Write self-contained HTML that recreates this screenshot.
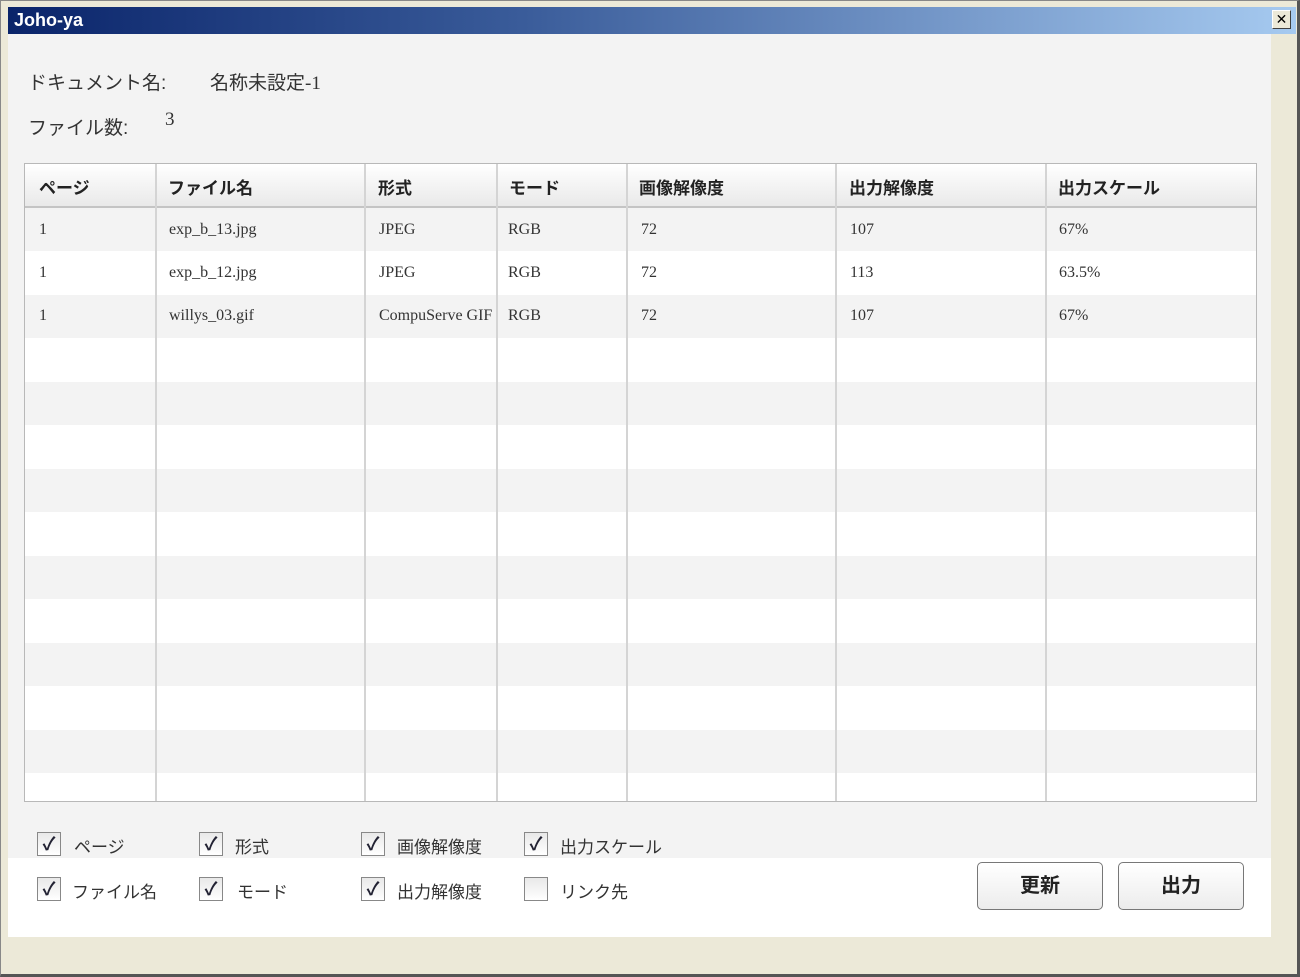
<!DOCTYPE html>
<html><head><meta charset="utf-8"><style>
*{margin:0;padding:0;box-sizing:border-box}
body{width:1300px;height:977px;background:#ece9d8;position:relative;overflow:hidden;font-family:"Liberation Sans","Noto Sans CJK JP",sans-serif}
.a{position:absolute}
.frame{left:0;top:0;width:1300px;height:977px;border:1px solid #888;border-right:3px solid #555;border-bottom:3px solid #555}
.title{left:8px;top:7px;width:1288px;height:27px;background:linear-gradient(90deg,#0a246a 0%,#3a5c9a 40%,#a6caf0 100%);color:#fff;font-weight:bold;font-size:18px;line-height:27px;padding-left:6px}
.close{left:1272px;top:10px;width:19px;height:19px;background:#ece9d8;border:1px solid;border-color:#fff #404040 #404040 #fff;font-size:14px;line-height:16px;text-align:center;color:#000}
.panel{left:8px;top:34px;width:1263px;height:903px;background:#f3f3f3}
.lbl{font-size:19px;color:#333}
.tbl{left:24px;top:163px;width:1233px;height:639px;border:1px solid #b8b8b8;background:#fff;overflow:hidden}
.hd{left:0;top:0;width:1231px;height:44px;background:linear-gradient(#fff,#e9e9e9);border-bottom:2px solid #c4c4c4}
.h{position:absolute;top:10px;font-size:17px;font-weight:bold;color:#222}
.row{position:absolute;left:0;width:1231px;height:43px}
.g{background:#f3f3f3}
.c{position:absolute;font-family:"Liberation Serif",serif;font-size:16px;color:#333;top:13px;white-space:nowrap;overflow:hidden}
.vl{position:absolute;top:0;width:2px;height:639px;background:#d4d4d4}
.cb{width:24px;height:24px;border:1px solid #888;background:linear-gradient(#e8e8e8,#fff);font-size:18px;line-height:22px;text-align:center;color:#223;font-weight:bold}
.cl{font-size:17px;color:#333}
.btn{width:126px;height:48px;border:1px solid #777;border-radius:5px;background:linear-gradient(#fff,#ececec);font-size:20px;font-weight:bold;text-align:center;line-height:46px;color:#222}
</style></head><body>
<div class="a frame"></div>
<div class="a title">Joho-ya</div>
<div class="a close">✕</div>
<div class="a panel"></div>
<div class="a" style="left:8px;top:858px;width:1263px;height:79px;background:#fff"></div>
<div class="a lbl" style="left:28px;top:68px">ドキュメント名:</div>
<div class="a lbl" style="left:210px;top:68px">名称未設定<span style="font-family:'Liberation Serif',serif">-1</span></div>
<div class="a lbl" style="left:28px;top:113px">ファイル数:</div>
<div class="a lbl" style="left:165px;top:109px;font-family:'Liberation Serif',serif">3</div>
<div class="a tbl">
<div class="a hd"></div>
<div class="row g" style="top:44px"></div>
<div class="row g" style="top:131px"></div>
<div class="row g" style="top:218px"></div>
<div class="row g" style="top:305px"></div>
<div class="row g" style="top:392px"></div>
<div class="row g" style="top:479px"></div>
<div class="row g" style="top:566px"></div>
<div class="vl" style="left:130px"></div><div class="vl" style="left:339px"></div><div class="vl" style="left:471px"></div><div class="vl" style="left:601px"></div><div class="vl" style="left:810px"></div><div class="vl" style="left:1020px"></div>
<div class="h" style="left:14px">ページ</div><div class="h" style="left:143px">ファイル名</div><div class="h" style="left:353px">形式</div><div class="h" style="left:484px">モード</div><div class="h" style="left:614px">画像解像度</div><div class="h" style="left:824px">出力解像度</div><div class="h" style="left:1033px">出力スケール</div>
<div style="position:absolute;top:44px;left:0;width:100%">
<div class="c" style="left:14px">1</div><div class="c" style="left:144px">exp_b_13.jpg</div><div class="c" style="left:354px">JPEG</div><div class="c" style="left:483px">RGB</div><div class="c" style="left:616px">72</div><div class="c" style="left:825px">107</div><div class="c" style="left:1034px">67%</div></div>
<div style="position:absolute;top:87px;left:0;width:100%">
<div class="c" style="left:14px">1</div><div class="c" style="left:144px">exp_b_12.jpg</div><div class="c" style="left:354px">JPEG</div><div class="c" style="left:483px">RGB</div><div class="c" style="left:616px">72</div><div class="c" style="left:825px">113</div><div class="c" style="left:1034px">63.5%</div></div>
<div style="position:absolute;top:130px;left:0;width:100%">
<div class="c" style="left:14px">1</div><div class="c" style="left:144px">willys_03.gif</div><div class="c" style="left:354px;width:116px">CompuServe GIF</div><div class="c" style="left:483px">RGB</div><div class="c" style="left:616px">72</div><div class="c" style="left:825px">107</div><div class="c" style="left:1034px">67%</div></div>
</div>
<div class="a cb" style="left:37px;top:832px">✓</div><div class="a cl" style="left:74px;top:833px">ページ</div>
<div class="a cb" style="left:37px;top:877px">✓</div><div class="a cl" style="left:72px;top:878px">ファイル名</div>
<div class="a cb" style="left:199px;top:832px">✓</div><div class="a cl" style="left:235px;top:833px">形式</div>
<div class="a cb" style="left:199px;top:877px">✓</div><div class="a cl" style="left:237px;top:878px">モード</div>
<div class="a cb" style="left:361px;top:832px">✓</div><div class="a cl" style="left:397px;top:833px">画像解像度</div>
<div class="a cb" style="left:361px;top:877px">✓</div><div class="a cl" style="left:397px;top:878px">出力解像度</div>
<div class="a cb" style="left:524px;top:832px">✓</div><div class="a cl" style="left:560px;top:833px">出力スケール</div>
<div class="a cb" style="left:524px;top:877px"></div><div class="a cl" style="left:560px;top:878px">リンク先</div>
<div class="a btn" style="left:977px;top:862px">更新</div>
<div class="a btn" style="left:1118px;top:862px">出力</div>
</body></html>
